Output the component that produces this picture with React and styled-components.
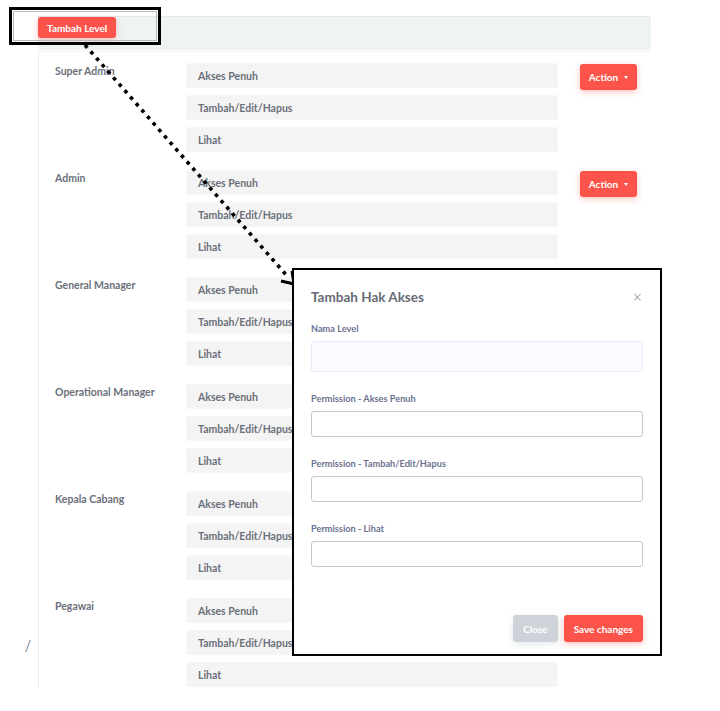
import React from "react";
import styled, { createGlobalStyle } from "styled-components";

const Global = createGlobalStyle`
  html, body { margin: 0; padding: 0; background: #fff; }
  body { font-family: "Lato", "Open Sans", sans-serif; }
  * { box-sizing: border-box; }
`;

const Page = styled.div`
  position: relative;
  width: 720px;
  height: 711px;
  overflow: hidden;
  display: flex;
  align-items: flex-start;
  padding-top: 16px;
`;

const Gutter = styled.div`
  width: 38px;
  flex-shrink: 0;
  align-self: stretch;
  display: flex;
  flex-direction: column;
  justify-content: flex-end;
  align-items: flex-start;
  padding: 0 0 57px 25px;
`;

const Slash = styled.span`
  font-family: "Open Sans", sans-serif;
  font-size: 17px;
  color: #5d6f8c;
  font-weight: 300;
  line-height: 1;
`;

const Main = styled.div`
  width: 613px;
  display: flex;
  flex-direction: column;
`;

const Band = styled.div`
  height: 34px;
  background: #eef3f3;
  border-top: 1px solid #e4e8e8;
  display: flex;
  align-items: flex-start;
`;

const RedButton = styled.button`
  border: none;
  background: #fc544b;
  color: #fff;
  font-family: "Lato", "Open Sans", sans-serif;
  font-weight: 700;
  font-size: ${(p) => p.$fs || 10}px;
  border-radius: 3px;
  height: ${(p) => p.$h || 21}px;
  padding: 0 ${(p) => p.$px || 9}px;
  margin-top: ${(p) => p.$mt || 0}px;
  box-shadow: 0 2px 6px rgba(252, 84, 75, 0.35);
  display: inline-flex;
  align-items: center;
  justify-content: center;
  gap: 6px;
  cursor: pointer;
`;

const GrayButton = styled(RedButton)`
  background: #cdd3d8;
  box-shadow: 0 2px 6px rgba(205, 211, 216, 0.5);
`;

const Card = styled.div`
  border-left: 1px solid #eceeee;
  border-top: 1px solid #f3f4f4;
  margin-top: 1px;
  padding: 11px 0 1px 16px;
  display: flex;
  flex-direction: column;
  gap: 18px;
`;

const Group = styled.div`
  display: grid;
  grid-template-columns: 109px 372px 57px;
  column-gap: 22px;
  align-items: start;
`;

const RoleLabel = styled.div`
  font-size: 10.5px;
  font-weight: 700;
  color: #6b707a;
  padding-top: 2px;
`;

const Perms = styled.div`
  display: flex;
  flex-direction: column;
  gap: 7px;
`;

const PermBox = styled.div`
  height: 25px;
  background: #f4f4f4;
  border: 1px solid #f7f7f7;
  border-radius: 2px;
  display: flex;
  align-items: center;
  padding-left: 11px;
  font-size: 10.5px;
  font-weight: 700;
  color: #6b707a;
`;

const Caret = styled.span`
  width: 0;
  height: 0;
  border-left: 2.5px solid transparent;
  border-right: 2.5px solid transparent;
  border-top: 3px solid #fff;
`;

const Highlight = styled.div`
  position: absolute;
  left: 9px;
  top: 7px;
  width: 152px;
  height: 38px;
  border: 3px solid #000;
  pointer-events: none;
  &::after {
    content: "";
    position: absolute;
    inset: 1px;
    border: 1px solid #b9b9b9;
  }
`;

const ArrowSvg = styled.svg`
  position: absolute;
  left: 0;
  top: 0;
  pointer-events: none;
`;

const Modal = styled.div`
  position: absolute;
  left: 292px;
  top: 268px;
  width: 370px;
  height: 388px;
  border: 2px solid #000;
  background: #fff;
  padding: 16px 17px 0 17px;
  display: flex;
  flex-direction: column;
`;

const ModalHead = styled.div`
  display: flex;
  align-items: center;
  justify-content: space-between;
  height: 22px;
`;

const ModalTitle = styled.div`
  font-size: 13.5px;
  font-weight: 700;
  color: #666b75;
`;

const CloseX = styled.span`
  font-family: "Open Sans", sans-serif;
  font-size: 16px;
  color: #8a8f98;
  font-weight: 300;
  line-height: 1;
  margin-right: 1px;
`;

const Field = styled.div`
  display: flex;
  flex-direction: column;
  gap: ${(p) => p.$gap || 7}px;
  margin-top: ${(p) => p.$mt}px;
`;

const FieldLabel = styled.label`
  font-size: 9.2px;
  font-weight: 700;
  color: #6c7190;
`;

const Input = styled.input`
  width: 332px;
  height: ${(p) => (p.$soft ? 31 : 26)}px;
  border: 1px solid ${(p) => (p.$soft ? "#e8e9f8" : "#c6c8cc")};
  background: ${(p) => (p.$soft ? "#fafbff" : "#fff")};
  border-radius: 3px;
  outline: none;
`;

const Footer = styled.div`
  margin-top: auto;
  margin-bottom: 12px;
  display: flex;
  justify-content: flex-end;
  gap: 6px;
`;

const roles = [
  "Super Admin",
  "Admin",
  "General Manager",
  "Operational Manager",
  "Kepala Cabang",
  "Pegawai",
];
const perms = ["Akses Penuh", "Tambah/Edit/Hapus", "Lihat"];

export default function App() {
  return (
    <>
      <Global />
      <Page>
        <Gutter>
          <Slash>/</Slash>
        </Gutter>
        <Main>
          <Band>
            <RedButton $px={9}>Tambah Level</RedButton>
          </Band>
          <Card>
            {roles.map((r) => (
              <Group key={r}>
                <RoleLabel>{r}</RoleLabel>
                <Perms>
                  {perms.map((p) => (
                    <PermBox key={p}>{p}</PermBox>
                  ))}
                </Perms>
                <RedButton $h={26} $px={10} $mt={1}>
                  Action <Caret />
                </RedButton>
              </Group>
            ))}
          </Card>
        </Main>

        <Highlight />
        <ArrowSvg width="720" height="711" viewBox="0 0 720 711">
          <line
            x1="85"
            y1="45"
            x2="288"
            y2="277"
            stroke="#000"
            strokeWidth="3.6"
            strokeDasharray="3.6 5"
          />
          <path
            d="M281 281 L294 284 L292 271"
            fill="none"
            stroke="#000"
            strokeWidth="3"
            strokeLinejoin="round"
          />
        </ArrowSvg>

        <Modal>
          <ModalHead>
            <ModalTitle>Tambah Hak Akses</ModalTitle>
            <CloseX>×</CloseX>
          </ModalHead>
          <Field $mt={15} $gap={7}>
            <FieldLabel>Nama Level</FieldLabel>
            <Input $soft />
          </Field>
          <Field $mt={21}>
            <FieldLabel>Permission - Akses Penuh</FieldLabel>
            <Input />
          </Field>
          <Field $mt={21}>
            <FieldLabel>Permission - Tambah/Edit/Hapus</FieldLabel>
            <Input />
          </Field>
          <Field $mt={21}>
            <FieldLabel>Permission - Lihat</FieldLabel>
            <Input />
          </Field>
          <Footer>
            <GrayButton $h={27} $px={10}>Close</GrayButton>
            <RedButton $h={27} $px={10}>Save changes</RedButton>
          </Footer>
        </Modal>
      </Page>
    </>
  );
}
